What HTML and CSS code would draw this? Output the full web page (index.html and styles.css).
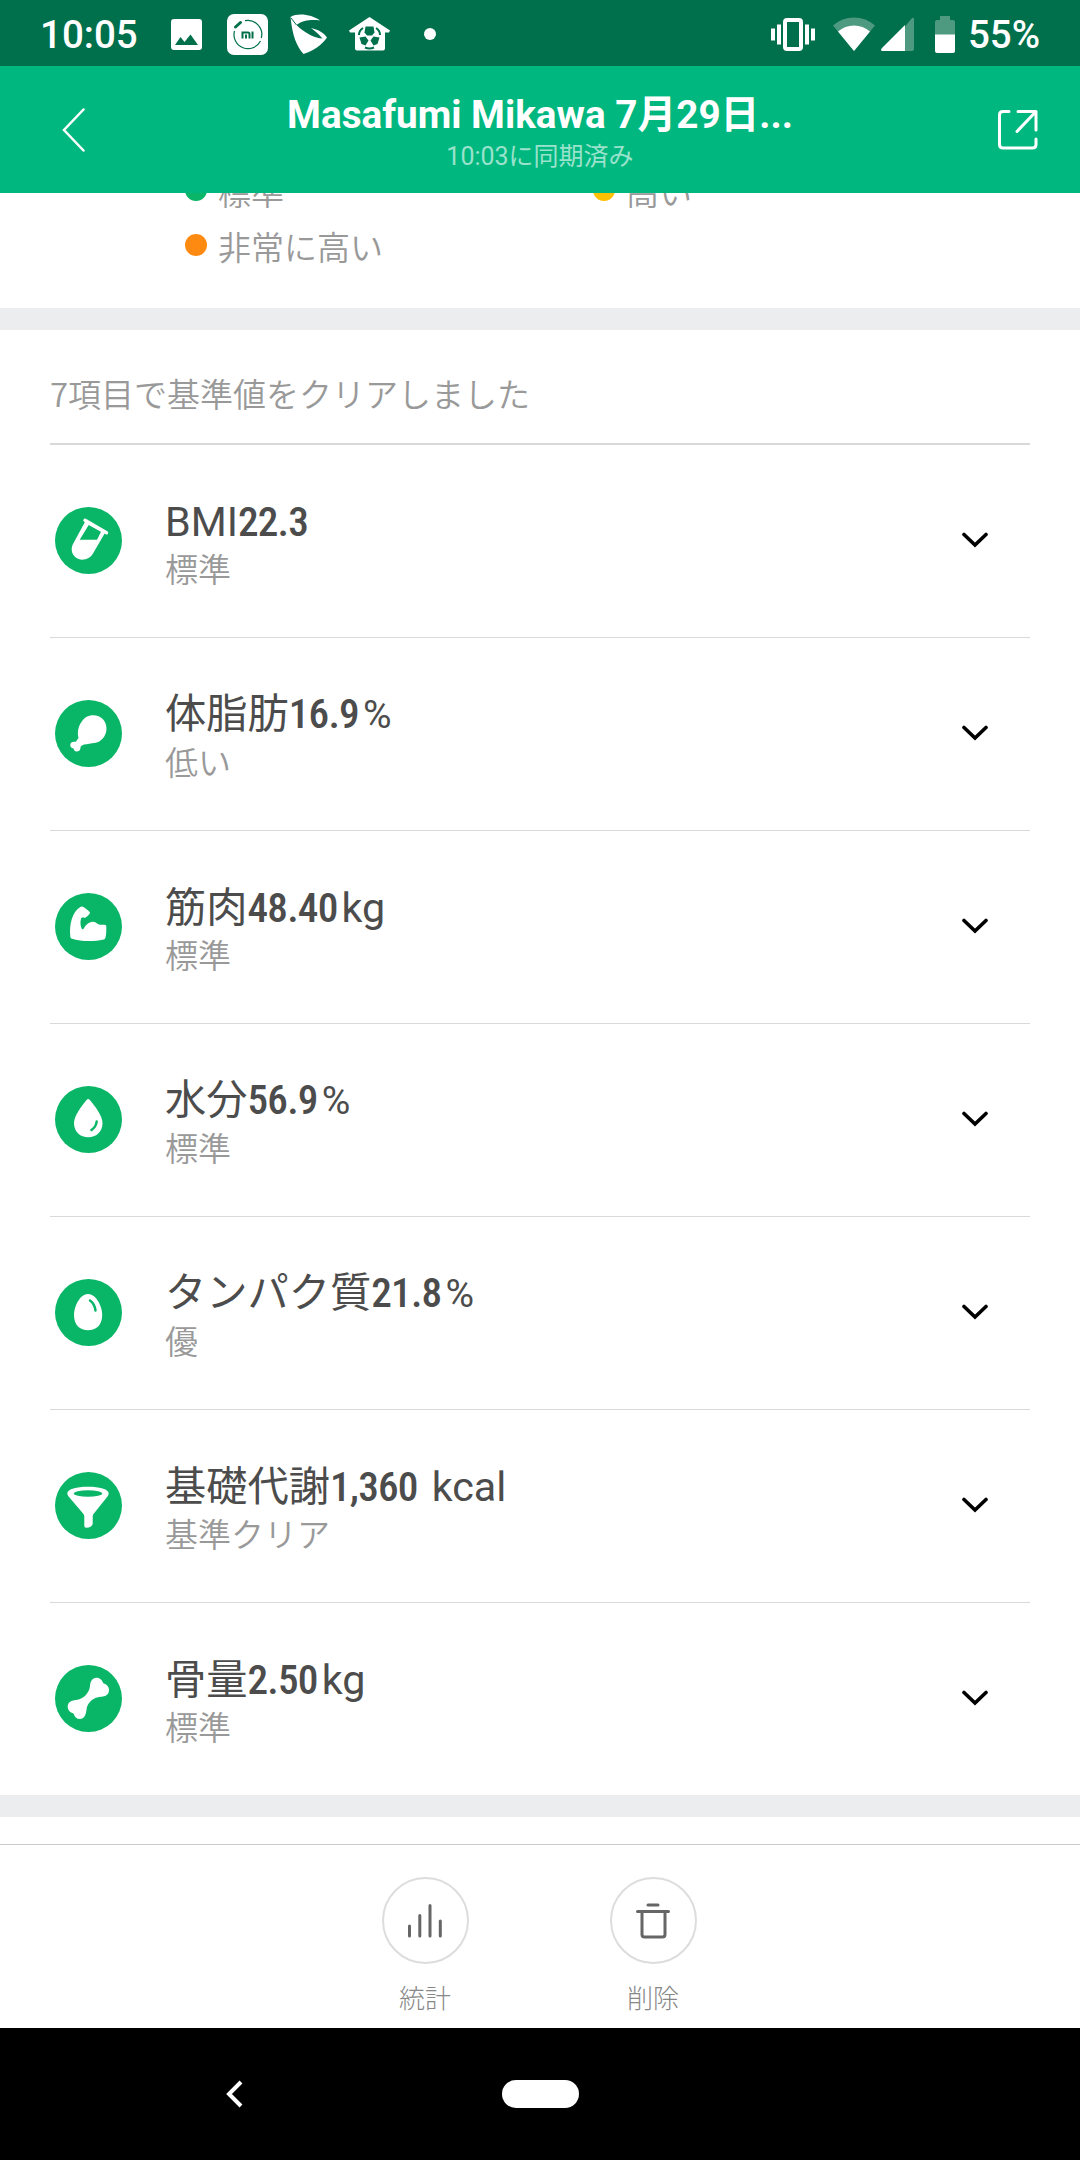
FILE: index.html
```
<!DOCTYPE html>
<html lang="ja">
<head>
  <meta charset="UTF-8">
  <meta name="viewport" content="width=device-width, initial-scale=1.0">
  <title>体組成</title>
  <link rel="stylesheet" href="styles.css">
</head>
<body>
  <div class="status-bar">
    <span class="clock">10:05</span>
    <div class="notifications">
      <svg width="31" height="31" viewBox="0 0 31 31"><path fill="#fff" fill-rule="evenodd" d="M3 0h25a3 3 0 0 1 3 3v25a3 3 0 0 1-3 3H3a3 3 0 0 1-3-3V3a3 3 0 0 1 3-3zM4 26h23l-7.5-10.5-6 7.5-4-5z"/></svg>
      <svg class="mi" width="41" height="41" viewBox="0 0 41 41"><rect width="41" height="41" rx="7" fill="#fff"/><path d="M7.500 17A14 14 0 0 0 33.500 27M34.300 24A14 14 0 0 0 18 6.700" fill="none" stroke="#006f4b" stroke-width="1.200"/><path d="M8.500 13l5-4.500" stroke="#006f4b" stroke-width="3" stroke-linecap="round"/><path d="M15.500 24.500v-6h5.500q1.500 0 1.500 1.500v4.500M19 20.500v4M25.500 17.500v7" fill="none" stroke="#006f4b" stroke-width="2"/></svg>
      <svg class="swoosh" width="37" height="40" viewBox="0 0 37 40"><path fill="#fff" d="M.5 3C8-1.500 22 .5 30 6.500c-8-1-17-.5-23.500 4.500 9 9 19 13 26 13.500-2-2-4-5-11.500-10.500 7 1.500 12.500 4.500 16 9.500-5 7.500-14 13.500-23.500 16.500C6.500 32 2.500 22 .5 3z"/><path d="M1 4l5.500 7" stroke="#006f4b" stroke-width="1"/></svg>
      <svg width="41" height="34" viewBox="0 0 41 34"><path fill="#fff" d="M20.500 0L41 13.500l-1 2h-4V31.500q0 2-2 2H8q-2 0-2-2v-16H1l-1-2z"/><g fill="#006f4b"><path d="M16.500 9.500h8l1 6-2.500 3h-5l-2.500-3z"/><path d="M10.500 20.500l6-1 3 4-3 5-4-1.500z"/><path d="M30.500 20.500l-6-1-3 4 3 5 4-1.500z"/></g><g fill="none" stroke="#006f4b" stroke-width="2"><path d="M14 11q-4 2.500-4 7M27 11q4 2.500 4 7M16 30.500q4.500 2 9 0"/></g></svg>
      <span class="more-dot"></span>
    </div>
    <div class="system">
      <svg class="vibrate" width="44" height="33" viewBox="0 0 44 33"><rect x="14" y="2" width="16" height="29" rx="2" fill="none" stroke="#fff" stroke-width="4"/><path d="M2 10.500v12M8 6.500v20M36 6.500v20M42 10.500v12" stroke="#fff" stroke-width="4"/></svg>
      <svg class="wifi" width="42" height="34" viewBox="0 0 42 34"><path fill="#4d9a81" d="M21 34L0 8.500Q9 .5 21 .5t21 8z"/><path fill="#fff" d="M21 34L5 14.500Q12 8.500 21 8.500t16 6z"/></svg>
      <svg class="signal" width="33" height="34" viewBox="0 0 33 34"><path fill="#4d9a81" d="M24 9.500L31 1q2-1 2 1v30q0 2-2 2h-7z"/><path fill="#fff" d="M24 8v26H1q-2-1 0-3z"/></svg>
      <svg class="battery" width="20" height="37" viewBox="0 0 20 37"><path fill="#4d9a81" d="M5 0h10v4h3q2 0 2 2v13H0V6q0-2 2-2h3z"/><path fill="#fff" d="M0 18.500h20V35q0 2-2 2H2q-2 0-2-2z"/></svg>
      <span>55%</span>
    </div>
  </div>

  <div class="header">
    <svg class="back" width="24" height="44" viewBox="0 0 24 44"><path d="M21.500 1.500L2 22l19.500 20.500" fill="none" stroke="#fff" stroke-width="2.500" stroke-linecap="round"/></svg>
    <div class="header-text">
      <div class="header-title">Masafumi Mikawa 7月29日...</div>
      <div class="header-sub">10:03に同期済み</div>
    </div>
    <svg class="share" width="40" height="40" viewBox="0 0 40 40"><path d="M11 1.500H5Q1.500 1.500 1.500 5v29.500Q1.500 38 5 38h29.500q3.500 0 3.500-3.500V29M20 1.500h18V20M37.500 2L19 21.500" fill="none" stroke="#fff" stroke-width="3" stroke-linecap="round" stroke-linejoin="round"/></svg>
  </div>

  <div class="legend">
    <div class="legend-item"><span class="dot dot-green"></span>標準</div>
    <div class="legend-item"><span class="dot dot-yellow"></span>高い</div>
    <div class="legend-item"><span class="dot dot-orange"></span>非常に高い</div>
  </div>

  <div class="metrics">
    <div class="metrics-title">7項目で基準値をクリアしました</div>

    <div class="metric">
      <svg class="metric-icon" viewBox="0 0 67 67"><circle cx="33.500" cy="33.500" r="33.500"/><path fill="#fff" fill-rule="evenodd" d="M30.500 14L18 37c-4 8 2 15.500 9 15.700 5 0 8.500-2.200 11-6.200L50.500 25zM33.700 18L46 24.700l-4 8H24.700z"/><path d="M30 13.300l21.500 12.500" stroke="#fff" stroke-width="3.400" stroke-linecap="round"/></svg>
      <div class="metric-text">
        <div class="metric-name">BMI<span class="num">22.3</span></div>
        <div class="metric-level">標準</div>
      </div>
      <svg class="chevron" viewBox="0 0 26 16"><path d="M2 2.500l11 10.500L24 2.500"/></svg>
    </div>

    <div class="metric">
      <svg class="metric-icon" viewBox="0 0 67 67"><circle cx="33.500" cy="33.500" r="33.500"/><path fill="#fff" d="M38.300 15.300C46 15.300 51.500 21 51.500 28.500c0 8-6 14-12 14.500-3 .3-7 1.500-10.500 1.500L26 46c-1 2 0 5.500-4.500 5.500-2 0-2.500-1.500-3-3-2-.2-3.500-1.500-3.200-3.700.5-4 4-2.500 5.700-3.300l2.500-3.500c-1.500-6 0-12 3-16 2.500-4 6.500-6.700 11.800-6.700z"/></svg>
      <div class="metric-text">
        <div class="metric-name">体脂肪<span class="num">16.9</span><span class="unit percent">%</span></div>
        <div class="metric-level">低い</div>
      </div>
      <svg class="chevron" viewBox="0 0 26 16"><path d="M2 2.500l11 10.500L24 2.500"/></svg>
    </div>

    <div class="metric">
      <svg class="metric-icon" viewBox="0 0 67 67"><circle cx="33.500" cy="33.500" r="33.500"/><path fill="#fff" d="M27.300 13.500c2.500 1 5.500 3.500 7.500 5.500 1 1.500-3 5.300-4.800 5.700-1.500.2-3-1-4 1-1 3-.5 7 .5 9.500.5 1.500 1.700 1.500 2.500 0 2-4 5.500-6.500 9.300-6.500 3 0 4 3 7 3h4.500q1.500 0 1.500 1.500c0 5 0 9-1 12q-.5 1-1.500 1.200c-11 2.500-22 2.300-32.500-1q-1-.6-1-2C14 31 17.500 19 25 14.200q1.300-1 2.300-.7z"/></svg>
      <div class="metric-text">
        <div class="metric-name">筋肉<span class="num">48.40</span><span class="unit">kg</span></div>
        <div class="metric-level">標準</div>
      </div>
      <svg class="chevron" viewBox="0 0 26 16"><path d="M2 2.500l11 10.500L24 2.500"/></svg>
    </div>

    <div class="metric">
      <svg class="metric-icon" viewBox="0 0 67 67"><circle cx="33.500" cy="33.500" r="33.500"/><path fill="#fff" d="M31.500 14q1.700-2 3.400 0C40 20 47.500 30 47.500 37c0 9-6.500 14.300-14.300 14.300S19 46 19 37c0-7 7.500-17 12.500-23z"/><path d="M41.700 35.500q-.5 5-5.200 8.500" fill="none" stroke="#09b566" stroke-width="2.500" stroke-linecap="round"/></svg>
      <div class="metric-text">
        <div class="metric-name">水分<span class="num">56.9</span><span class="unit percent">%</span></div>
        <div class="metric-level">標準</div>
      </div>
      <svg class="chevron" viewBox="0 0 26 16"><path d="M2 2.500l11 10.500L24 2.500"/></svg>
    </div>

    <div class="metric">
      <svg class="metric-icon" viewBox="0 0 67 67"><circle cx="33.500" cy="33.500" r="33.500"/><path fill="#fff" d="M33 15c8 0 14.200 12 14.200 21 0 10-6 15.300-14.200 15.300S19 46 19 36c0-9 6-21 14-21z"/><path d="M35 21.500q4.500 3 5.500 10" fill="none" stroke="#09b566" stroke-width="2.500" stroke-linecap="round"/></svg>
      <div class="metric-text">
        <div class="metric-name">タンパク質<span class="num">21.8</span><span class="unit percent">%</span></div>
        <div class="metric-level">優</div>
      </div>
      <svg class="chevron" viewBox="0 0 26 16"><path d="M2 2.500l11 10.500L24 2.500"/></svg>
    </div>

    <div class="metric">
      <svg class="metric-icon" viewBox="0 0 67 67"><circle cx="33.500" cy="33.500" r="33.500"/><path fill="#fff" d="M12.300 21c.5-4 9-6.300 20.700-6.300S53.200 17 53.700 21c0 2-1 3-2 4.500L38.500 42q-.8 1-.8 2.500v7q-.5 4-6.500 4.300-1.900 0-1.900-1.800v-9.500q0-1.500-.8-2.500L14 25c-1-1.300-1.700-2-1.700-4z"/><ellipse cx="33" cy="21.500" rx="14.200" ry="3.200" fill="#09b566"/></svg>
      <div class="metric-text">
        <div class="metric-name">基礎代謝<span class="num">1,360</span><span class="unit kcal">kcal</span></div>
        <div class="metric-level">基準クリア</div>
      </div>
      <svg class="chevron" viewBox="0 0 26 16"><path d="M2 2.500l11 10.500L24 2.500"/></svg>
    </div>

    <div class="metric">
      <svg class="metric-icon" viewBox="0 0 67 67"><circle cx="33.500" cy="33.500" r="33.500"/><path fill="#fff" d="M41.300 12.700c4 0 6 2.500 7 5.500 3.500 1 5.700 3.500 5.700 7 0 4.500-4 6.500-8.500 6.500-7 .5-13.500 6-14 13-.5 5-2.500 9.300-6.500 9.300-3.500 0-5.500-2-6.500-5.500-3.500-1-5.800-3.500-5.800-7 0-4.500 4-6.200 8.300-6.500 7-.5 13.500-7 14-14 .3-4.500 2.300-8.300 6.300-8.300z"/></svg>
      <div class="metric-text">
        <div class="metric-name">骨量<span class="num">2.50</span><span class="unit">kg</span></div>
        <div class="metric-level">標準</div>
      </div>
      <svg class="chevron" viewBox="0 0 26 16"><path d="M2 2.500l11 10.500L24 2.500"/></svg>
    </div>
  </div>

  <div class="actions">
    <div class="action">
      <div class="action-circle">
        <svg width="36" height="36" viewBox="0 0 36 36"><path d="M2.500 23v10M12.800 12.500V33M23 2.500V33M33.300 18v15"/></svg>
      </div>
      <div class="action-label">統計</div>
    </div>
    <div class="action">
      <div class="action-circle">
        <svg width="36" height="36" viewBox="0 0 36 36"><path d="M13 2h10M2.500 8.500h31M7 9v22.500Q7 34 9.500 34h18q2.500 0 2.500-2.500V9"/></svg>
      </div>
      <div class="action-label">削除</div>
    </div>
  </div>

  <div class="nav-bar">
    <svg class="nav-back" width="18" height="28" viewBox="0 0 18 28"><path d="M15 2L3 14l12 12" fill="none" stroke="#fff" stroke-width="4"/></svg>
    <span class="nav-home"></span>
  </div>
</body>
</html>
```
FILE: styles.css
```
* {
  box-sizing: border-box;
}
body {
  margin: 0;
  width: 1080px;
  height: 2160px;
  display: flex;
  flex-direction: column;
  overflow: hidden;
  background: #fff;
  font-family: Roboto, 'Noto Sans CJK JP', sans-serif;
}
svg {
  display: block;
  flex-shrink: 0;
}

/* status bar */
.status-bar {
  height: 66px;
  flex-shrink: 0;
  display: flex;
  align-items: center;
  padding: 2px 40px 0 40px;
  background: #006f4b;
  color: #fff;
  font-size: 38.5px;
  font-weight: 500;
}
.clock {
  width: 131px;
}
.notifications {
  display: flex;
  align-items: center;
  gap: 22px;
}
.mi {
  margin-left: 3px;
}
.more-dot {
  width: 12px;
  height: 12px;
  margin-left: 12px;
  border-radius: 50%;
  background: #fff;
}
.system {
  margin-left: auto;
  display: flex;
  align-items: center;
}
.wifi {
  margin-left: 18px;
}
.signal {
  margin-left: 6px;
}
.battery {
  margin: 0 13px 0 21px;
}

/* header */
.header {
  height: 127px;
  flex-shrink: 0;
  display: flex;
  align-items: center;
  justify-content: space-between;
  padding: 0 42px 0 62px;
  background: #00b77f;
  color: #fff;
}
.header-text {
  padding: 5px 4px 0 0;
  text-align: center;
}
.header-title {
  font-size: 38.7px;
  font-weight: 700;
  line-height: 50px;
}
.header-sub {
  font-size: 25px;
  line-height: 34px;
  color: #99e2cc;
}

/* legend of the chart, scrolled under the header */
.legend {
  height: 115px;
  flex-shrink: 0;
  overflow: hidden;
  display: grid;
  grid-template-columns: 408px 408px;
  grid-auto-rows: 55px;
  align-content: end;
  padding: 0 0 32px 185px;
}
.legend-item {
  display: flex;
  align-items: center;
  font-size: 33px;
  font-weight: 350;
  line-height: 55px;
  color: #999;
}
.dot {
  width: 22px;
  height: 22px;
  margin: -8px 11px 0 0;
  border-radius: 50%;
}
.dot-green {
  background: #09b566;
}
.dot-yellow {
  background: #ffc000;
}
.dot-orange {
  background: #ff8a12;
}

/* metric list */
.metrics {
  flex-shrink: 0;
  padding: 0 50px;
  border-top: 22px solid #ecedef;
  border-bottom: 22px solid #ecedef;
}
.metrics-title {
  height: 115px;
  padding-top: 12px;
  border-bottom: 2px solid #d9d9d9;
  font-family: 'Noto Sans CJK JP', sans-serif;
  font-size: 33px;
  font-weight: 350;
  line-height: 103px;
  color: #999;
}
.metric {
  height: 193px;
  display: flex;
  align-items: center;
  padding: 0 42px 2px 5px;
  border-bottom: 1px solid #d9d9d9;
}
.metric:last-child {
  height: 192px;
  border-bottom: none;
}
.metric-icon {
  width: 67px;
  height: 67px;
  fill: #09b566;
}
.metric-text {
  flex: 1;
  margin-left: 43px;
  padding-top: 11px;
}
.metric-name {
  font-size: 41.25px;
  line-height: 50px;
  color: #4c4c4c;
}
.metric-level {
  font-size: 33px;
  font-weight: 350;
  line-height: 48px;
  color: #999;
}
.num {
  font-weight: 500;
  font-stretch: 87%;
  letter-spacing: -0.8px;
}
.unit {
  margin-left: 4px;
}
.percent {
  font-size: 39px;
}
.kcal {
  margin-left: 14px;
}
.chevron {
  width: 26px;
  height: 16px;
  fill: none;
  stroke: #000;
  stroke-width: 3.6;
  stroke-linecap: round;
}

/* bottom actions */
.actions {
  margin-top: 27px;
  height: 184px;
  flex-shrink: 0;
  display: flex;
  justify-content: center;
  gap: 141px;
  padding: 32px 2px 0 0;
  border-top: 1px solid #ccc;
}
.action {
  width: 87px;
  text-align: center;
}
.action-circle {
  height: 87px;
  display: flex;
  align-items: center;
  justify-content: center;
  border: 2px solid #ddd;
  border-radius: 50%;
}
.action-circle svg {
  fill: none;
  stroke: #666;
  stroke-width: 3;
  stroke-linecap: round;
}
.action-label {
  margin-top: 16px;
  font-size: 26px;
  font-weight: 300;
  line-height: 38px;
  color: #888;
}

/* android navigation */
.nav-bar {
  height: 132px;
  flex-shrink: 0;
  display: flex;
  align-items: center;
  background: #000;
}
.nav-back {
  margin-left: 226px;
}
.nav-home {
  width: 77px;
  height: 28px;
  margin-left: 258px;
  border-radius: 14px;
  background: #fff;
}
```
